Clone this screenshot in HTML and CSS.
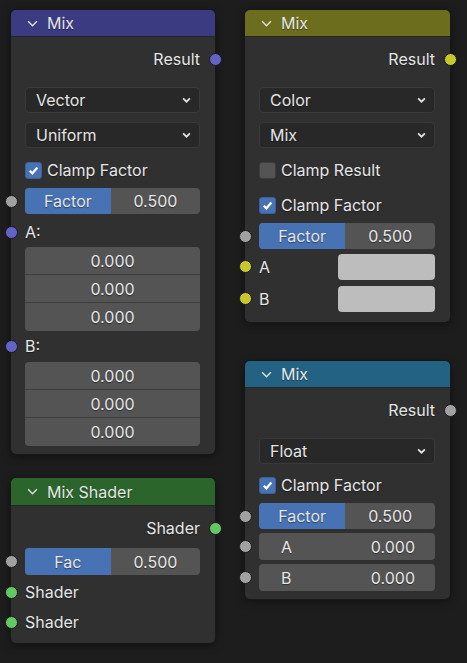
FILE: index.html
```html
<!DOCTYPE html>
<html>
<head>
<meta charset="utf-8">
<link rel="stylesheet" href="styles.css">
</head>
<body>
<div class="canvas">

  <!-- Vector Mix -->
  <div class="node n-vec">
    <div class="head h-vec"><svg class="chev" viewBox="0 0 12 8"><path d="M1 1.5 L6 6.5 L11 1.5"/></svg><span>Mix</span></div>
    <div class="body">
      <div class="row out">Result<i class="sock so s-vec"></i></div>
      <div class="drop">Vector<svg class="dchev" viewBox="0 0 8 5"><path d="M1 1 L4 4 L7 1"/></svg></div>
      <div class="drop mt9">Uniform<svg class="dchev" viewBox="0 0 8 5"><path d="M1 1 L4 4 L7 1"/></svg></div>
      <div class="row chk mt9"><span class="box on"><svg viewBox="0 0 12 12"><path d="M2.5 6.2 L5 8.6 L9.6 3.3"/></svg></span>Clamp Factor</div>
      <div class="slider mt5"><i class="sock si s-flt"></i><span class="fill" style="width:49%">Factor</span><span class="val">0.500</span></div>
      <div class="row lbl mt6"><i class="sock si s-vec"></i>A:</div>
      <div class="vecf mt3"><div>0.000</div><div>0.000</div><div>0.000</div></div>
      <div class="row lbl mt3"><i class="sock si s-vec"></i>B:</div>
      <div class="vecf mt4"><div>0.000</div><div>0.000</div><div>0.000</div></div>
    </div>
  </div>

  <!-- Color Mix -->
  <div class="node n-col">
    <div class="head h-col"><svg class="chev" viewBox="0 0 12 8"><path d="M1 1.5 L6 6.5 L11 1.5"/></svg><span>Mix</span></div>
    <div class="body">
      <div class="row out">Result<i class="sock so s-col"></i></div>
      <div class="drop">Color<svg class="dchev" viewBox="0 0 8 5"><path d="M1 1 L4 4 L7 1"/></svg></div>
      <div class="drop mt9">Mix<svg class="dchev" viewBox="0 0 8 5"><path d="M1 1 L4 4 L7 1"/></svg></div>
      <div class="row chk mt9"><span class="box"></span>Clamp Result</div>
      <div class="row chk mt9"><span class="box on"><svg viewBox="0 0 12 12"><path d="M2.5 6.2 L5 8.6 L9.6 3.3"/></svg></span>Clamp Factor</div>
      <div class="slider mt5"><i class="sock si s-flt"></i><span class="fill" style="width:49%">Factor</span><span class="val">0.500</span></div>
      <div class="row swrow mt4"><i class="sock si s-col"></i><span class="sl">A</span><span class="swatch"></span></div>
      <div class="row swrow mt5"><i class="sock si s-col"></i><span class="sl">B</span><span class="swatch"></span></div>
    </div>
  </div>

  <!-- Float Mix -->
  <div class="node n-flt">
    <div class="head h-flt"><svg class="chev" viewBox="0 0 12 8"><path d="M1 1.5 L6 6.5 L11 1.5"/></svg><span>Mix</span></div>
    <div class="body">
      <div class="row out">Result<i class="sock so s-flt"></i></div>
      <div class="drop">Float<svg class="dchev" viewBox="0 0 8 5"><path d="M1 1 L4 4 L7 1"/></svg></div>
      <div class="row chk mt8"><span class="box on"><svg viewBox="0 0 12 12"><path d="M2.5 6.2 L5 8.6 L9.6 3.3"/></svg></span>Clamp Factor</div>
      <div class="slider mt5"><i class="sock si s-flt"></i><span class="fill" style="width:49%">Factor</span><span class="val">0.500</span></div>
      <div class="numf mt4"><i class="sock si s-flt"></i><span>A</span><span>0.000</span></div>
      <div class="numf mt4"><i class="sock si s-flt"></i><span>B</span><span>0.000</span></div>
    </div>
  </div>

  <!-- Mix Shader -->
  <div class="node n-shd">
    <div class="head h-shd"><svg class="chev" viewBox="0 0 12 8"><path d="M1 1.5 L6 6.5 L11 1.5"/></svg><span>Mix Shader</span></div>
    <div class="body">
      <div class="row out">Shader<i class="sock so s-shd"></i></div>
      <div class="slider mt8 tall"><i class="sock si s-flt"></i><span class="fill" style="width:49%">Fac</span><span class="val">0.500</span></div>
      <div class="row lbl mt5"><i class="sock si s-shd"></i>Shader</div>
      <div class="row lbl mt6"><i class="sock si s-shd"></i>Shader</div>
    </div>
  </div>

</div>
</body>
</html>
```
FILE: styles.css
```css
html, body {
  margin: 0;
  padding: 0;
  background: #1d1d1d;
}
.canvas {
  position: relative;
  width: 467px;
  height: 663px;
  overflow: hidden;
  font-family: Inter, "Noto Sans", sans-serif;
  font-size: 16px;
  color: #e6e6e6;
  text-shadow: 0 1px 1px rgba(0,0,0,0.45);
}
.node {
  position: absolute;
  background: #303030;
  border-radius: 5px;
  box-shadow: 0 0 0 1px #181818, 0 2px 8px rgba(0,0,0,0.5);
  display: flex;
  flex-direction: column;
}
.n-vec { left: 11px; top: 10px; width: 204px; height: 444px; }
.n-col { left: 245px; top: 10px; width: 205px; height: 312px; }
.n-flt { left: 245px; top: 361px; width: 205px; height: 238px; }
.n-shd { left: 11px; top: 478px; width: 204px; height: 165px; }

.head {
  height: 27px;
  border-radius: 5px 5px 0 0;
  display: flex;
  align-items: center;
  padding-left: 16px;
  gap: 9px;
  font-size: 16px;
  border-bottom: 1px solid #262626;
  box-sizing: border-box;
}
.n-shd .head { height: 28px; }
.h-vec { background: #3b3b82; }
.h-col { background: #6d6d1e; }
.h-flt { background: #246283; }
.h-shd { background: #2b652b; }
.chev { width: 11px; height: 7px; fill: none; stroke: #e0e0e0; stroke-width: 1.6; }

.body {
  display: flex;
  flex-direction: column;
  padding: 10px 15px 0 14px;
}
.row {
  position: relative;
  height: 24px;
  display: flex;
  align-items: center;
}
.out { justify-content: flex-end; }
.sock {
  position: absolute;
  width: 11px;
  height: 11px;
  border-radius: 50%;
  border: 1px solid #1a1a1a;
  top: 50%;
  margin-top: -6.5px;
}
.so { right: -22px; }
.si { left: -20.5px; }
.s-vec { background: #6363c7; }
.s-col { background: #c7c729; }
.s-flt { background: #a1a1a1; }
.s-shd { background: #63c763; }

.drop {
  margin-top: 16px;
  height: 26px;
  box-sizing: border-box;
  background: #282828;
  border: 1px solid #3a3a3a;
  border-radius: 4px;
  display: flex;
  align-items: center;
  padding: 0 8px 0 10px;
  justify-content: space-between;
}
.dchev { width: 9px; height: 6px; fill: none; stroke: #e6e6e6; stroke-width: 1.5; }

.mt3 { margin-top: 3px; }
.mt4 { margin-top: 4px; }
.mt5 { margin-top: 5px; }
.mt6 { margin-top: 6px; }
.mt8 { margin-top: 8px; }
.mt9 { margin-top: 9px; }

.chk { height: 26px; gap: 5px; }
.box {
  width: 17px;
  height: 17px;
  border-radius: 3px;
  background: #545454;
  box-sizing: border-box;
  border: 1px solid #3d3d3d;
  display: flex;
  align-items: center;
  justify-content: center;
}
.box.on { background: #4772b3; border-color: #3b609a; }
.box svg { width: 13px; height: 13px; fill: none; stroke: #fff; stroke-width: 2; }

.slider {
  position: relative;
  height: 26px;
  background: #545454;
  border-radius: 4px;
  display: flex;
  align-items: stretch;
}
.slider.tall { height: 27px; }
.slider .fill {
  background: #4772b3;
  border-radius: 4px 0 0 4px;
  display: flex;
  align-items: center;
  justify-content: center;
}
.slider .val {
  flex: 1;
  display: flex;
  align-items: center;
  justify-content: center;
}

.vecf {
  display: flex;
  flex-direction: column;
  border-radius: 4px;
  overflow: hidden;
  background: #545454;
}
.vecf div {
  height: 27px;
  display: flex;
  align-items: center;
  justify-content: center;
  border-top: 1px solid #3d3d3d;
}
.vecf div:first-child { border-top: none; }
.vecf div:last-child { height: 28px; }

.swrow { height: 27px; }
.swrow .sl { flex: 1; }
.swrow .swatch {
  width: 97px;
  height: 26px;
  background: #bdbdbd;
  border-radius: 4px;
}

.numf {
  position: relative;
  height: 27px;
  background: #545454;
  border-radius: 4px;
  display: flex;
  align-items: center;
  justify-content: space-between;
  padding: 0 20px 0 22px;
}
```
